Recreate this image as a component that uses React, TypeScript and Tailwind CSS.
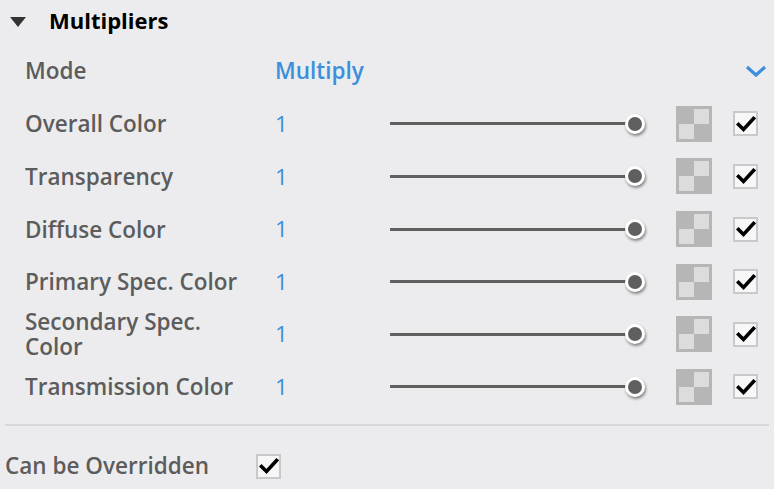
import React from "react";

const rows = [
  "Overall Color",
  "Transparency",
  "Diffuse Color",
  "Primary Spec. Color",
  "Secondary Spec. Color",
  "Transmission Color",
];

const Check = () => (
  <svg width="20" height="18" viewBox="0 0 20 18">
    <path d="M2.5 9.5 L7.5 14.5 L17.5 3.5" fill="none" stroke="#000" strokeWidth="3.6" strokeLinecap="square" />
  </svg>
);

const CheckBox = () => (
  <div className="flex h-[25px] w-[25px] items-center justify-center border-2 border-[#c9c9cb] bg-[#f7f7f7]">
    <Check />
  </div>
);

const Swatch = () => (
  <div className="grid h-[36px] w-[36px] grid-cols-2 grid-rows-2 bg-[#b6b6b6] p-[3px]">
    <div className="bg-[#b6b6b6]" />
    <div className="bg-[#dcdcdc]" />
    <div className="bg-[#dcdcdc]" />
    <div className="bg-[#b6b6b6]" />
  </div>
);

const Slider = () => (
  <div className="relative flex h-[24px] w-[255px] items-center">
    <div className="h-[3px] w-[244px] bg-[#606060]" />
    <div className="absolute left-[235px] top-[2px] h-[20px] w-[20px] rounded-full border-[3px] border-white bg-[#5f5f5f] shadow-[1px_2px_3px_rgba(0,0,0,0.45)]" />
  </div>
);

export default function App() {
  return (
    <div
      className="h-[489px] w-[774px] bg-[#ececee] text-[22.5px]"
      style={{ fontFamily: '"Open Sans", "Noto Sans", sans-serif' }}
    >
      <div className="flex h-[45px] items-center">
        <svg className="ml-[10px] mr-[23px]" width="16" height="11" viewBox="0 0 16 11">
          <path d="M0 0 H16 L8 10 Z" fill="#333" />
        </svg>
        <span className="pb-[5px] text-[22px] font-bold text-black">Multipliers</span>
      </div>

      <div className="pl-[25px] pr-[7px]">
        <div className="flex h-[52.6px] items-center">
          <span className="w-[250px] font-semibold text-[#5c5c5c]">Mode</span>
          <span className="flex-1 font-semibold text-[#3b8fdd]">Multiply</span>
          <svg width="22" height="13" viewBox="0 0 22 13">
            <path d="M2 2 L11 10 L20 2" fill="none" stroke="#3b8fdd" strokeWidth="3.2" />
          </svg>
        </div>

        {rows.map((label) => (
          <div key={label} className="flex h-[52.6px] items-center">
            <span className="w-[250px] shrink-0 pr-[25px] leading-[25px] font-semibold text-[#5c5c5c]">{label}</span>
            <span className="w-[115px] text-[#3b8fdd]">1</span>
            <Slider />
            <div className="ml-[31px]">
              <Swatch />
            </div>
            <div className="ml-[21px]">
              <CheckBox />
            </div>
          </div>
        ))}
      </div>

      <div className="ml-[5px] mt-[11px] h-[2px] w-[764px] bg-[#d8d8da]" />

      <div className="flex h-[80px] items-center pl-[5px]">
        <span className="w-[251px] font-semibold text-[#5c5c5c]">Can be Overridden</span>
        <CheckBox />
      </div>
    </div>
  );
}
